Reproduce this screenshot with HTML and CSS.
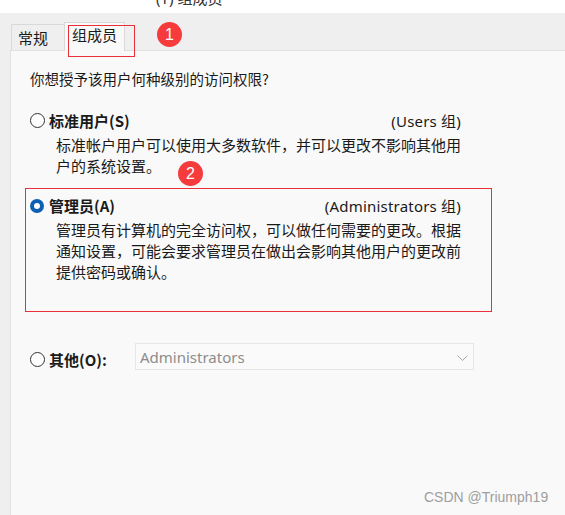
FILE: index.html
```html
<!DOCTYPE html>
<html lang="zh">
<head>
<meta charset="utf-8">
<title>组成员</title>
<link rel="stylesheet" href="styles.css">
</head>
<body>
<div class="titlebar"><span class="title-text">(Y) 组成员</span></div>
<div class="tabs">
  <div class="tab">常规</div>
  <div class="tab active">组成员</div>
  <div class="mark mark-tab"></div>
  <div class="badge badge-1">1</div>
</div>
<div class="panel">
  <p class="question">你想授予该用户何种级别的访问权限?</p>

  <div class="option option-std">
    <div class="opt-head">
      <span class="radio"></span>
      <span class="opt-label">标准用户(S)</span>
      <span class="opt-group">(Users 组)</span>
    </div>
    <p class="opt-desc">标准帐户用户可以使用大多数软件，并可以更改不影响其他用户的系统设置。</p>
    <div class="badge badge-2">2</div>
  </div>

  <div class="option option-admin">
    <div class="opt-head">
      <span class="radio checked"></span>
      <span class="opt-label">管理员(A)</span>
      <span class="opt-group">(Administrators 组)</span>
    </div>
    <p class="opt-desc">管理员有计算机的完全访问权，可以做任何需要的更改。根据通知设置，可能会要求管理员在做出会影响其他用户的更改前提供密码或确认。</p>
  </div>

  <div class="option-other">
    <span class="radio"></span>
    <span class="opt-label other-label">其他(O):</span>
    <div class="combo">
      <span class="combo-text">Administrators</span>
      <svg class="chev" width="11" height="6" viewBox="0 0 11 6"><path d="M0.5 0.5 L5.5 5.5 L10.5 0.5" fill="none" stroke="#a6a6a6" stroke-width="1"/></svg>
    </div>
  </div>
</div>
<div class="watermark">CSDN @Triumph19</div>
</body>
</html>
```

FILE: styles.css
```css
html, body {
  margin: 0;
  padding: 0;
}
body {
  width: 565px;
  height: 515px;
  overflow: hidden;
  background: #efefef;
  font-family: "Noto Sans", "Noto Sans CJK SC", sans-serif;
  font-size: 15px;
  color: #1a1a1a;
  position: relative;
}
.titlebar {
  height: 13px;
  background: #ffffff;
  overflow: hidden;
}
.title-text {
  display: block;
  margin-left: 156px;
  margin-top: -12px;
  font-size: 15px;
  line-height: 20px;
  color: #333;
}
.tabs {
  position: relative;
  height: 37px;
  display: flex;
  align-items: flex-end;
  padding-left: 11px;
}
.tab {
  box-sizing: border-box;
  height: 26px;
  width: 54px;
  padding-left: 6px;
  border: 1px solid #d9d9d9;
  border-bottom: none;
  line-height: 25px;
  font-family: "Noto Sans CJK SC", sans-serif;
  font-size: 15px;
}
.tab.active {
  height: 29px;
  width: 61px;
  margin-left: -1px;
  margin-bottom: -1px;
  padding-left: 7px;
  line-height: 24px;
  background: #f9f9f9;
  position: relative;
  z-index: 2;
}
.mark {
  position: absolute;
  border: 1px solid #e8303a;
}
.mark-tab {
  left: 68px;
  top: 12px;
  width: 65px;
  height: 30px;
  z-index: 3;
}
.badge {
  position: absolute;
  width: 25px;
  height: 25px;
  border-radius: 50%;
  background: #f63b3d;
  color: #fff;
  font-family: "Liberation Sans", sans-serif;
  font-size: 16px;
  line-height: 25px;
  text-align: center;
  z-index: 4;
}
.badge-1 {
  left: 157px;
  top: 9px;
}
.panel {
  box-sizing: border-box;
  margin-left: 10px;
  height: 465px;
  background: #f9f9f9;
  border-top: 1px solid #e0e0e0;
  border-left: 1px solid #e3e3e3;
  padding: 17px 0 0 0;
}
.question {
  margin: 0 0 0 19px;
  line-height: 21px;
  font-family: "Noto Sans CJK SC", sans-serif;
  font-size: 14.5px;
}
.option {
  position: relative;
}
.option-std {
  margin: 21px 0 0 19px;
  width: 431px;
}
.opt-head {
  display: flex;
  align-items: center;
  height: 21px;
}
.radio {
  box-sizing: border-box;
  width: 15px;
  height: 15px;
  border-radius: 50%;
  border: 1px solid #333;
  background: #fff;
  flex: none;
}
.radio.checked {
  width: 14px;
  height: 14px;
  border: 4.5px solid #0c5fb3;
  background: #fff;
  margin-right: 1px;
}
.opt-label {
  margin-left: 4px;
  font-weight: bold;
  font-family: "Noto Sans CJK SC", sans-serif;
  font-size: 15px;
}
.opt-group {
  margin-left: auto;
  font-size: 15px;
  letter-spacing: 0.2px;
}
.opt-desc {
  margin: 3px 0 0 26px;
  line-height: 21px;
  font-family: "Noto Sans CJK SC", sans-serif;
  font-size: 15px;
  width: 410px;
}
.badge-2 {
  left: 148px;
  top: 51px;
}
.option-admin {
  box-sizing: border-box;
  margin: 12px 0 0 14px;
  width: 467px;
  height: 124px;
  border: 1px solid #e8303a;
  padding: 6px 30px 0 4px;
}
.option-other {
  display: flex;
  align-items: center;
  margin: 31px 0 0 19px;
  height: 27px;
}
.option-other .radio {
  margin-top: 6px;
}
.other-label {
  margin-top: 6px;
  width: 86px;
}
.combo {
  box-sizing: border-box;
  width: 339px;
  height: 27px;
  border: 1px solid #e6e6e6;
  background: #fafafa;
  display: flex;
  align-items: center;
  padding: 0 5px 0 4px;
}
.combo-text {
  color: #8c8c8c;
  font-size: 15px;
  flex: 1;
}
.chev {
  margin-top: 2px;
}
.watermark {
  position: absolute;
  left: 424px;
  top: 489px;
  font-family: "Liberation Sans", sans-serif;
  font-size: 14px;
  color: #9e9e9e;
}
```
